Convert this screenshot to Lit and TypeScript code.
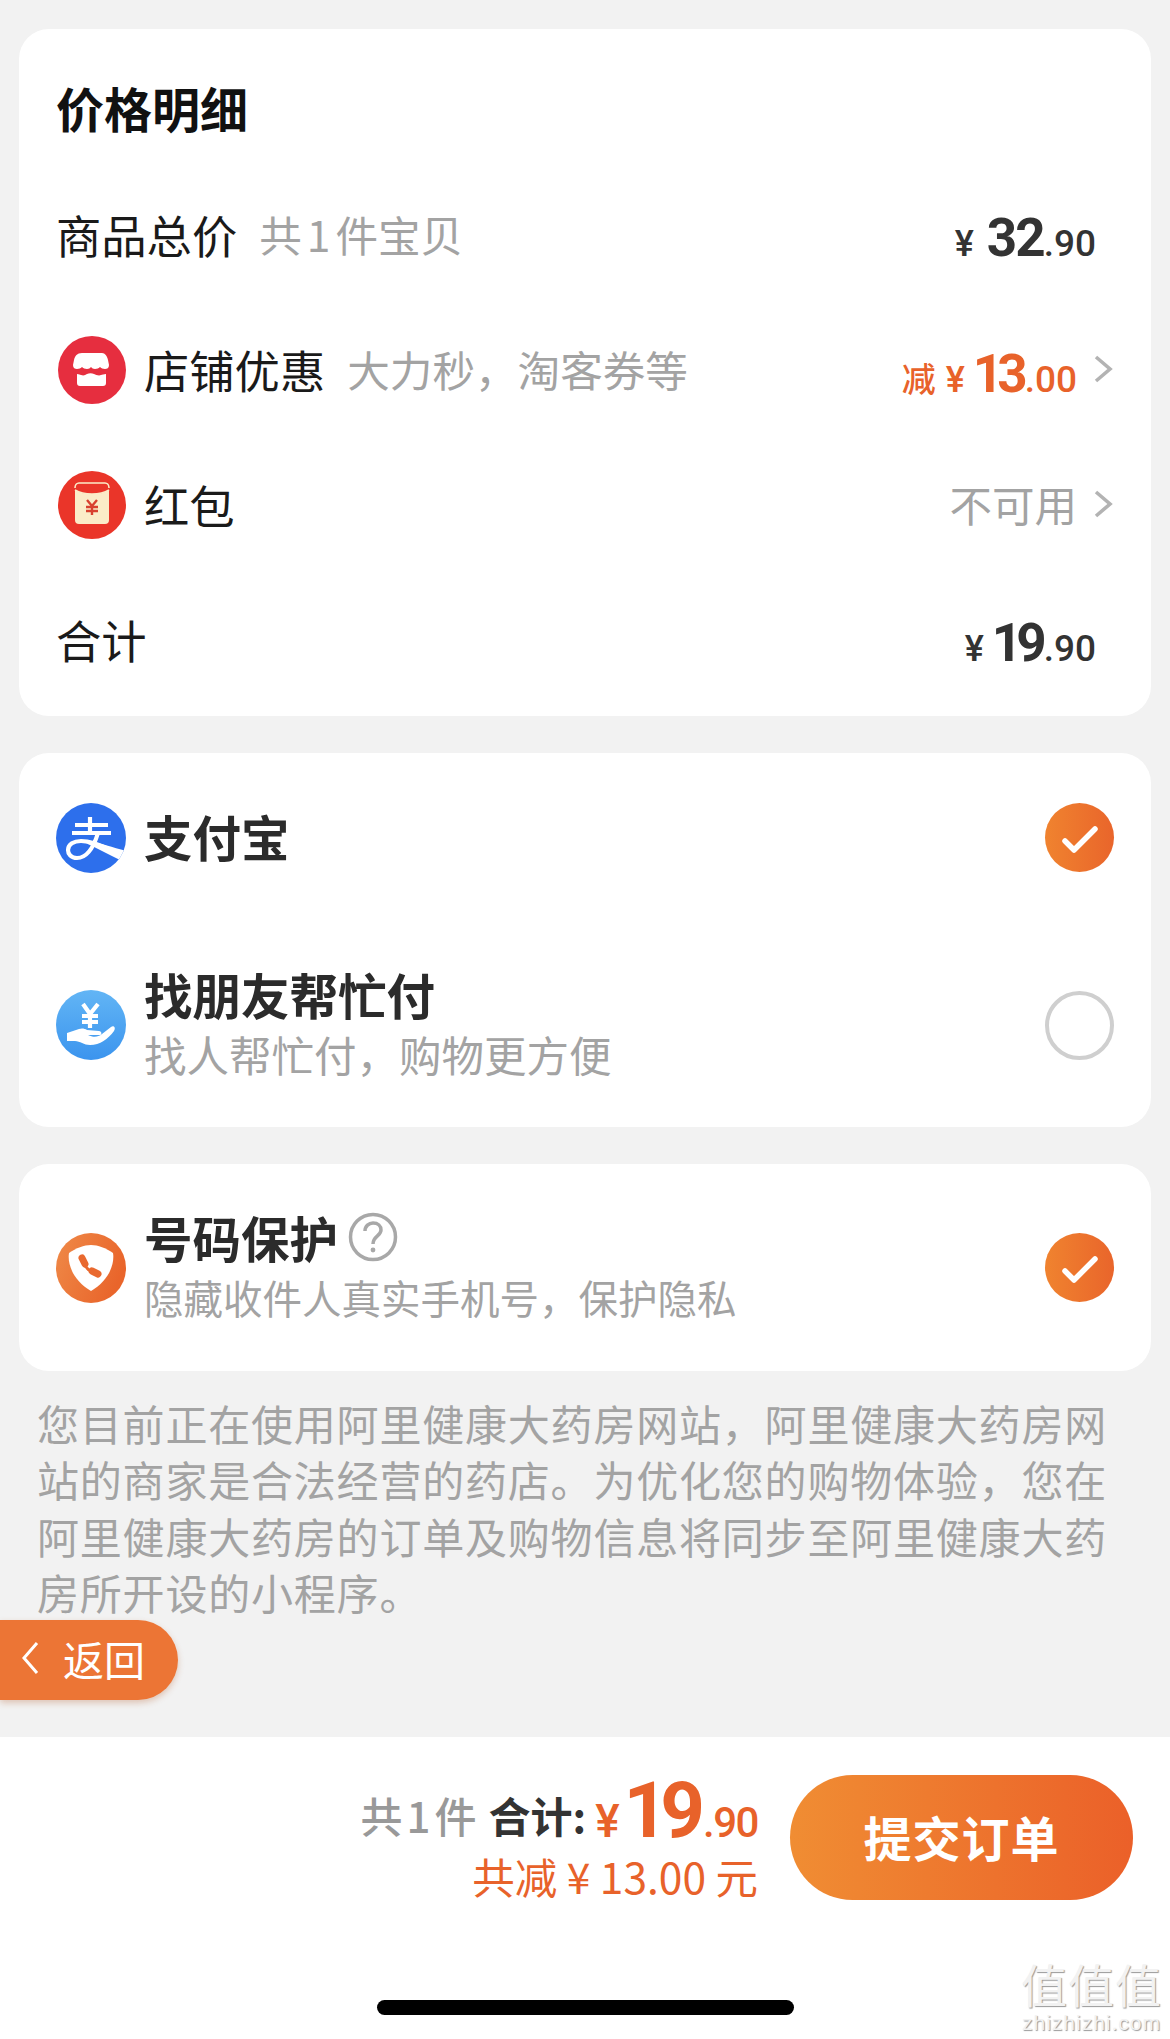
import { LitElement, css, html, svg } from 'lit'
import { customElement } from 'lit/decorators.js'

const chevron = svg`<svg class="chev" viewBox="0 0 20 30" width="20" height="30"><path d="M3 3l14 12L3 27" fill="none" stroke="#b3b3b3" stroke-width="3.6"/></svg>`

const check = html`<span class="radio on"><svg viewBox="0 0 70 70" width="70" height="70"><path d="M20 38l9 9 21-21" fill="none" stroke="#fff" stroke-width="5.5" stroke-linecap="round" stroke-linejoin="round"/></svg></span>`

const shopIcon = svg`<svg class="ico" viewBox="0 0 68 68" width="68" height="68">
  <circle cx="34" cy="34" r="34" fill="#e62e3f"/>
  <path d="M24 17h20c3 0 5 3 6 7l1 5c0 3-2 4-4 4-2 0-4-1-5-2-1 1-3 2-5 2s-3-1-4-2c-1 1-2 2-4 2s-4-1-5-2c-1 1-3 2-5 2-2 0-4-1-4-4l1-5c1-4 3-7 8-7z" fill="#fff"/>
  <path d="M19 38c2 0 3 1 4 1 3 1 4 0 6-1 2-1 5-1 7 0 2 1 5 2 7 1 1 0 3-1 5-1v9c0 2-1 3-3 3H22c-2 0-3-1-3-3z" fill="#fff"/>
</svg>`

const packetIcon = svg`<svg class="ico" viewBox="0 0 68 68" width="68" height="68">
  <circle cx="34" cy="34" r="34" fill="#ea3529"/>
  <rect x="17" y="12" width="34" height="41" rx="4" fill="#fbecc8"/>
  <path d="M17 16c0-2 2-4 4-4h26c2 0 4 2 4 4v3c-5 3-10 4-17 4s-12-1-17-4z" fill="#ea3529"/>
  <path d="M17 19c5 3 10 4 17 4s12-1 17-4" fill="none" stroke="#fbecc8" stroke-width="1.6"/>
  <path d="M17 17c0-3 2-5 4-5h26c2 0 4 2 4 5" fill="none" stroke="#fbecc8" stroke-width="1.6"/>
  <path d="M29 29l5 6 5-6M28 36h12M28 40h12M34 35v9" fill="none" stroke="#d8402f" stroke-width="2.4"/>
</svg>`

const alipayIcon = svg`<svg class="ico" viewBox="0 0 70 70" width="70" height="70">
  <defs><clipPath id="ac"><circle cx="35" cy="35" r="35"/></clipPath></defs>
  <circle cx="35" cy="35" r="35" fill="#2d6fec"/>
  <g clip-path="url(#ac)">
    <path d="M19 22h33M16 30h39M34 14v16" fill="none" stroke="#fff" stroke-width="4.2"/>
    <path d="M42 30C38 43 32 55 21 55c-6 0-9-4-9-8 0-6 6-9 13-9 12 0 24 7 40 13" fill="none" stroke="#fff" stroke-width="4.2"/>
    <path d="M34 38c11 2 23 7 37 10l-7 9C53 52 43 46 32 41z" fill="#fff"/>
  </g>
</svg>`

const helpPayIcon = svg`<svg class="ico" viewBox="0 0 70 70" width="70" height="70">
  <defs><linearGradient id="hp" x1="0" y1="0" x2="0" y2="1"><stop offset="0" stop-color="#62b5f5"/><stop offset="1" stop-color="#3b94ee"/></linearGradient></defs>
  <circle cx="35" cy="35" r="35" fill="url(#hp)"/>
  <path d="M27 14l7 10 8-10M26 26h16M26 32h16M34 24v14" fill="none" stroke="#fff" stroke-width="4.2"/>
  <path d="M11 43l9-3c4-2 8-2 11 0l12 1c3 0 3 4 1 4H32c6 3 10 2 14-1l9-7c3-2 5 1 3 4-6 8-14 14-24 14-6 0-10-4-15-4h-8z" fill="#fff"/>
</svg>`

const shieldIcon = svg`<svg class="ico" viewBox="0 0 70 70" width="70" height="70">
  <defs><linearGradient id="sh" x1="0" y1="0" x2="1" y2="0.4"><stop offset="0" stop-color="#ef8a48"/><stop offset="1" stop-color="#e9652b"/></linearGradient></defs>
  <circle cx="35" cy="35" r="35" fill="url(#sh)"/>
  <path d="M35 12c7 0 15 3 22 8 2 12-5 28-22 38C18 48 11 32 13 20c7-5 15-8 22-8z" fill="#fff"/>
  <path d="M27 26c1 7 6 13 14 15" fill="none" stroke="#e9692f" stroke-width="3"/>
  <path d="M26 25l3 6M36 38l6 3" fill="none" stroke="#e9692f" stroke-width="7" stroke-linecap="round"/>
</svg>`

const backChev = svg`<svg viewBox="0 0 20 36" width="20" height="36"><path d="M17 3L4 18l13 15" fill="none" stroke="#fff" stroke-width="3"/></svg>`

const money = (big: string, small: string, tight = false) => html`<span class="yen">¥</span><span class="big ${tight ? 'tight' : ''}">${big}</span><span class="small">.${small}</span>`

@customElement('app-root')
export class AppRoot extends LitElement {
  static styles = css`
    :host {
      display: flex;
      flex-direction: column;
      position: relative;
      height: 2039px;
      overflow: hidden;
      background: #f2f2f2;
      color: #1a1a1a;
      font-family: "Noto Sans CJK SC", "Noto Sans", sans-serif;
    }

    main {
      flex: 1;
      display: flex;
      flex-direction: column;
      gap: 37px;
      padding: 29px 19px 0;
    }

    .card {
      background: #fff;
      border-radius: 30px;
    }

    .details {
      height: 687px;
      padding: 0 38px 0 37px;
      box-sizing: border-box;
    }

    h2 {
      margin: 0;
      height: 139px;
      display: flex;
      align-items: center;
      padding-top: 16px;
      box-sizing: border-box;
      font-size: 48px;
      font-weight: 700;
      color: #111;
    }

    .row {
      height: 135px;
      display: flex;
      align-items: center;
      font-size: 45.3px;
    }

    .row.first {
      margin-top: -2px;
    }

    .ico {
      flex: none;
      display: block;
    }

    .row .ico {
      margin: 3px 18px 0 2px;
    }

    .hint {
      margin-left: 22px;
      font-size: 42.6px;
      color: #a3a3a3;
    }

    .hint .one {
      margin: 0 5px;
    }

    .value {
      margin: 8px 17px 0 auto;
      display: flex;
      align-items: baseline;
      font-family: Roboto, "Noto Sans CJK SC", sans-serif;
      font-weight: 500;
      color: #333;
    }

    .right {
      margin-left: auto;
      display: flex;
      align-items: center;
      gap: 16px;
    }

    .right .value {
      margin: 10px 0 0;
    }

    .plain {
      font-size: 42.5px;
      color: #a3a3a3;
    }

    .value .yen {
      font-size: 36px;
      margin-right: 13px;
    }

    .value .big {
      font-size: 53px;
      font-weight: 700;
      letter-spacing: -2px;
    }

    .value .big.tight {
      letter-spacing: -6px;
      margin-left: -5px;
      margin-right: 3px;
    }

    .value .small {
      font-size: 37px;
    }

    .value.red {
      color: #e8622a;
    }

    .value .cut {
      font-family: "Noto Sans CJK SC", sans-serif;
      font-size: 34px;
      margin-right: 10px;
    }

    .pay {
      display: flex;
      align-items: center;
      padding: 0 37px;
    }

    .pay .ico {
      margin-right: 18px;
    }

    .pay .name {
      font-size: 48.5px;
      font-weight: 700;
      color: #2b2b2b;
      line-height: 58px;
      display: flex;
      align-items: center;
      gap: 10px;
    }

    .pay .sub {
      font-size: 42.5px;
      line-height: 62px;
      color: #a3a3a3;
    }

    .privacy .sub {
      font-size: 39.5px;
    }

    .radio {
      margin-left: auto;
      width: 69px;
      height: 69px;
      box-sizing: border-box;
      border-radius: 50%;
      border: 4px solid #cfcfcf;
      flex: none;
    }

    .radio.on {
      border: 0;
      background: linear-gradient(90deg, #f0832f, #e9652b);
    }

    .radio svg {
      display: block;
    }

    .methods {
      height: 374px;
      display: flex;
      flex-direction: column;
    }

    .alipay {
      height: 170px;
    }

    .alipay .name {
      margin-bottom: 4px;
    }

    .friends {
      height: 204px;
      padding-top: 1px;
    }

    .privacy {
      height: 207px;
    }

    .notice {
      margin: -13px 18px 0;
      font-size: 42px;
      line-height: 56.4px;
      letter-spacing: 0.8px;
      color: #a3a3a3;
    }

    .back {
      position: absolute;
      left: 0;
      top: 1620px;
      width: 178px;
      height: 80px;
      display: flex;
      align-items: center;
      gap: 23px;
      padding: 0 0 4px 20px;
      box-sizing: border-box;
      background: #ec7535;
      border-radius: 0 40px 40px 0;
      box-shadow: 0 3px 6px rgba(180, 90, 40, 0.3);
      color: #fff;
      font-size: 41px;
    }

    .bar {
      height: 302px;
      background: #fff;
      position: relative;
      display: flex;
      justify-content: flex-end;
      gap: 32px;
      padding: 38px 37px 0 0;
      box-sizing: border-box;
    }

    .sum {
      display: flex;
      flex-direction: column;
      align-items: flex-end;
    }

    .total {
      display: flex;
      align-items: baseline;
      height: 72px;
      font-size: 42px;
      line-height: 72px;
    }

    .total .count {
      color: #999;
      font-weight: 500;
      transform: translateY(-4px);
    }

    .total .count .one {
      margin: 0 4px;
    }

    .total .label {
      color: #333;
      font-weight: 700;
      margin: 0 9px 0 12px;
      transform: translateY(-4px);
    }

    .total .yen,
    .total .big,
    .total .small {
      color: #e8622a;
      font-family: Roboto, sans-serif;
    }

    .total .yen {
      font-weight: 500;
      font-size: 46px;
      margin-right: 4px;
    }

    .total .big {
      font-weight: 700;
      font-size: 78px;
      letter-spacing: -8px;
      margin-right: 6px;
    }

    .total .small {
      font-weight: 500;
      font-size: 42px;
      letter-spacing: -1.5px;
    }

    .saved {
      margin-top: 4px;
      font-size: 42.5px;
      line-height: 50px;
      color: #e8622a;
    }

    .submit {
      width: 343px;
      height: 125px;
      border: 0;
      border-radius: 63px;
      background: linear-gradient(90deg, #f08d33, #eb6029);
      color: #fff;
      font: inherit;
      font-size: 48px;
      font-weight: 700;
      letter-spacing: 1px;
      padding: 0 0 4px;
    }

    .home {
      position: absolute;
      left: 377px;
      top: 263px;
      width: 417px;
      height: 15px;
      border-radius: 8px;
      background: #000;
    }

    .mark {
      position: absolute;
      right: 8px;
      bottom: 6px;
      display: flex;
      flex-direction: column;
      align-items: center;
      gap: 5px;
      color: #f2f2f2;
      text-shadow: 1px 1px 1px #999;
    }

    .mark b {
      font-size: 46px;
      line-height: 50px;
      font-weight: 400;
      letter-spacing: 1px;
    }

    .mark i {
      font-family: "Liberation Sans", sans-serif;
      font-style: normal;
      font-size: 21px;
      line-height: 20px;
      letter-spacing: 1px;
    }
  `

  render() {
    return html`
      <main>
        <section class="card details">
          <h2>价格明细</h2>
          <div class="row first">
            <span>商品总价</span><span class="hint">共<span class="one">1</span>件宝贝</span>
            <span class="value">${money('32', '90')}</span>
          </div>
          <div class="row">
            ${shopIcon}<span>店铺优惠</span><span class="hint">大力秒，淘客券等</span>
            <span class="right">
              <span class="value red"><span class="cut">减</span>${money('13', '00', true)}</span>${chevron}
            </span>
          </div>
          <div class="row">
            ${packetIcon}<span>红包</span>
            <span class="right"><span class="plain">不可用</span>${chevron}</span>
          </div>
          <div class="row">
            <span>合计</span>
            <span class="value">${money('19', '90', true)}</span>
          </div>
        </section>

        <section class="card methods">
          <div class="pay alipay">${alipayIcon}<div class="name">支付宝</div>${check}</div>
          <div class="pay friends">
            ${helpPayIcon}
            <div>
              <div class="name">找朋友帮忙付</div>
              <div class="sub">找人帮忙付，购物更方便</div>
            </div>
            <span class="radio"></span>
          </div>
        </section>

        <section class="card pay privacy">
          ${shieldIcon}
          <div>
            <div class="name">号码保护
              <svg viewBox="0 0 50 50" width="50" height="50"><circle cx="25" cy="25" r="22.5" fill="none" stroke="#a8a8a8" stroke-width="3.5"/><path d="M17 19c0-5 4-8 8-8 5 0 8 3 8 7 0 6-8 6-8 14" fill="none" stroke="#a8a8a8" stroke-width="3.5"/><circle cx="25" cy="38" r="2.4" fill="#a8a8a8"/></svg>
            </div>
            <div class="sub">隐藏收件人真实手机号，保护隐私</div>
          </div>
          ${check}
        </section>

        <p class="notice">您目前正在使用阿里健康大药房网站，阿里健康大药房网站的商家是合法经营的药店。为优化您的购物体验，您在阿里健康大药房的订单及购物信息将同步至阿里健康大药房所开设的小程序。</p>
      </main>

      <div class="back">${backChev}<span>返回</span></div>

      <footer class="bar">
        <div class="sum">
          <div class="total">
            <span class="count">共<span class="one">1</span>件</span><span class="label">合计:</span><span class="yen">¥</span><span class="big">19</span><span class="small">.90</span>
          </div>
          <div class="saved">共减 ¥ 13.00 元</div>
        </div>
        <button class="submit">提交订单</button>
        <div class="home"></div>
        <div class="mark"><b>值值值</b><i>zhizhizhi.com</i></div>
      </footer>
    `
  }
}
